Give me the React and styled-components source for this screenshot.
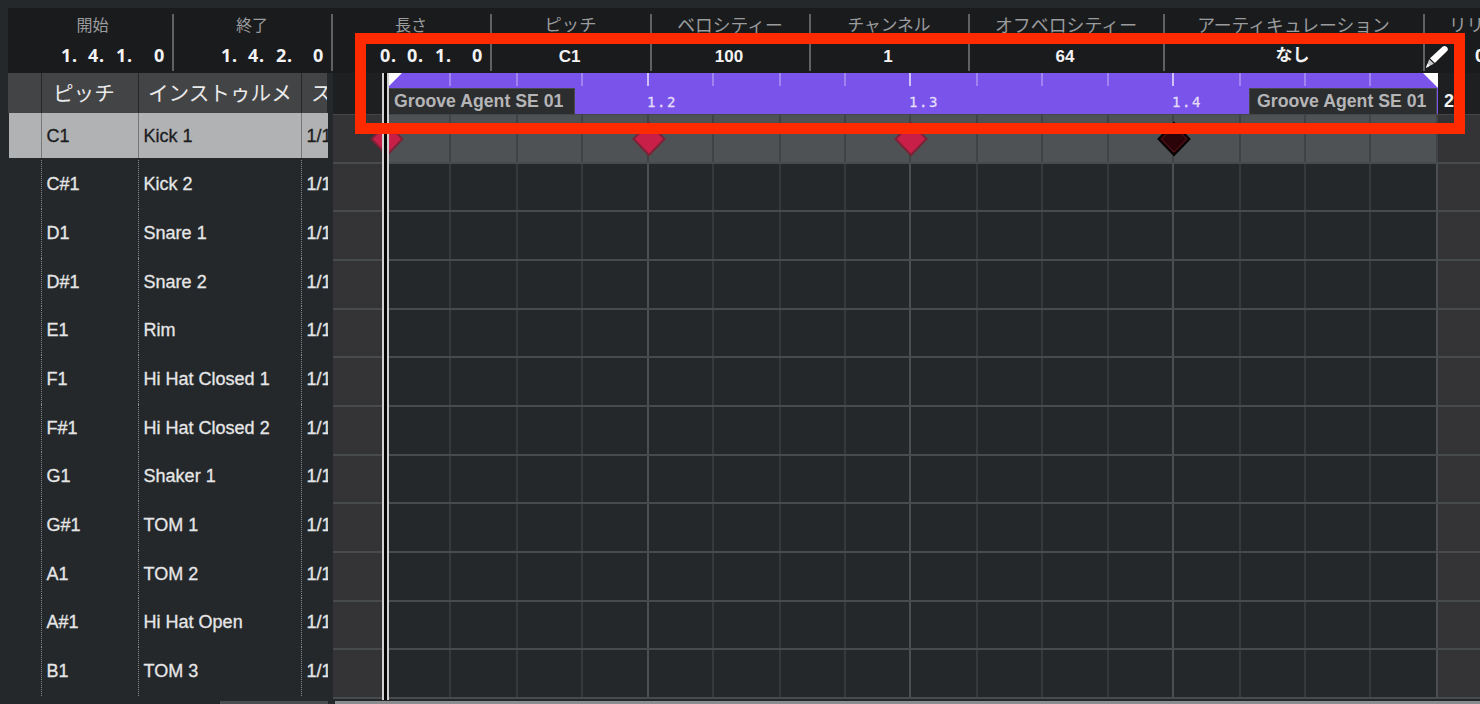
import React from 'react';
import styled, { createGlobalStyle } from "styled-components";

const infoFields = [
    { label: "開始", position: ["1.", "4.", "1.", "0"], width: 166, indent: 6 },
    { label: "終了", position: ["1.", "4.", "2.", "0"], width: 159 },
    { label: "長さ", position: ["0.", "0.", "1.", "0"], width: 159 },
    { label: "ピッチ", value: "C1", width: 160, size: 17.3 },
    { label: "ベロシティー", value: "100", width: 159, size: 17.8 },
    { label: "チャンネル", value: "1", width: 159, size: 16.7 },
    { label: "オフベロシティー", value: "64", width: 195, size: 17.9 },
    { label: "アーティキュレーション", value: "なし", width: 260, size: 17.8, jp: true },
];

const drums = [
    ["C1", "Kick 1"],
    ["C#1", "Kick 2"],
    ["D1", "Snare 1"],
    ["D#1", "Snare 2"],
    ["E1", "Rim"],
    ["F1", "Hi Hat Closed 1"],
    ["F#1", "Hi Hat Closed 2"],
    ["G1", "Shaker 1"],
    ["G#1", "TOM 1"],
    ["A1", "TOM 2"],
    ["A#1", "Hi Hat Open"],
    ["B1", "TOM 3"],
];

// width of each sixteenth, the last column of every beat is the 4th
const steps = [64, 67, 65, 66, 65, 67, 65, 65, 67, 65, 66, 65, 67, 65, 65, 67];

const notes = [
    { x: 54, selected: false },
    { x: 316, selected: false },
    { x: 578, selected: false },
    { x: 841, selected: true },
];

function Note({ x, selected }) {
    return (
        <NoteIcon $x={x} viewBox="0 0 36 36">
            <path
                d="M18 2 L33.5 18 L18 34 L2.5 18 Z"
                fill={selected ? "#2a0408" : "#c81f48"}
                stroke={selected ? "#080204" : "#7d2137"}
                strokeWidth="2"
            />
            {selected && <path d="M18 5 L30.5 18 L18 31 L5.5 18 Z" fill="none" stroke="#62141f" strokeWidth="1" />}
        </NoteIcon>
    )
}

function App() {
    return (
        <Container>
            <GlobalStyle />
            <InfoLine>
                {infoFields.map((f) => (
                    <InfoCell key={f.label} $width={f.width} $indent={f.indent}>
                        <InfoLabel $size={f.size}>{f.label}</InfoLabel>
                        {f.position ? (
                            <Position>
                                {f.position.map((p, i) => <span key={i}>{p}</span>)}
                            </Position>
                        ) : (
                            <InfoValue $jp={f.jp}>{f.value}</InfoValue>
                        )}
                    </InfoCell>
                ))}
                <LastCell>
                    <InfoLabel $size={17.5}>リリ</InfoLabel>
                    <Position>0</Position>
                </LastCell>
            </InfoLine>

            <Body>
                <DrumList>
                    <ListHeader>
                        <span />
                        <HeaderCell $pad={11}>ピッチ</HeaderCell>
                        <HeaderCell $pad={9}>インストゥルメ</HeaderCell>
                        <HeaderCell $pad={9}>ス</HeaderCell>
                    </ListHeader>
                    {drums.map(([pitch, name], i) => (
                        <DrumRow key={pitch} $active={i === 0}>
                            <span />
                            <DrumCell $active={i === 0}>{pitch}</DrumCell>
                            <DrumCell $active={i === 0}>{name}</DrumCell>
                            <DrumCell $active={i === 0}>1/1</DrumCell>
                        </DrumRow>
                    ))}
                    <ListScroll />
                </DrumList>

                <Editor>
                    <Ruler>
                        <RulerGutter />
                        <Part>
                            {steps.map((w, i) => (
                                <Tick key={i} $width={w} $beat={i % 4 === 3} $last={i === 15}>
                                    {i % 4 === 3 && i < 15 && <BeatText>{`1.${(i + 1) / 4 + 1}`}</BeatText>}
                                </Tick>
                            ))}
                            <LeftFlag viewBox="0 0 15 15"><path d="M0 0H15L0 15Z" fill="#fff" /></LeftFlag>
                            <RightFlag viewBox="0 0 15 15"><path d="M0 0H15V15Z" fill="#fff" /></RightFlag>
                            <PartName $side="left">Groove Agent SE 01</PartName>
                            <PartName $side="right">Groove Agent SE 01</PartName>
                        </Part>
                        <NextBar>2</NextBar>
                    </Ruler>
                    <Lanes>
                        {drums.map(([pitch], row) => (
                            <Lane key={pitch}>
                                <LaneGutter />
                                {steps.map((w, i) => (
                                    <Step key={i} $width={w} $active={row === 0} $beat={i % 4 === 3} />
                                ))}
                                <LaneEnd />
                            </Lane>
                        ))}
                        {notes.map((n) => <Note key={n.x} {...n} />)}
                    </Lanes>
                    <EditorScroll />
                    <Cursor />
                </Editor>
            </Body>

            <Highlight />
            <Pencil viewBox="0 0 26 26">
                <path d="M18.2 1.8 Q20.5 0 22.6 2 Q24.8 4.2 23 6.2 L10.2 18.6 L5.2 13.8 Z" fill="#fff" />
                <path d="M4.4 14.8 L9.2 19.4 L1 23.6 Z" fill="#c9c9c9" />
                <path d="M2.6 19.4 L5 21.6 L1 23.8 Z" fill="#fff" />
            </Pencil>
        </Container>
    )
}

export default App;

const GlobalStyle = createGlobalStyle`
* {
    box-sizing: border-box;
}

body {
    margin: 0;
    background: #24292c;
    overflow: hidden;
}
`

const Container = styled.div`
position: relative;
width: 1480px;
height: 704px;
padding: 8px 0 0 8px;
overflow: hidden;
background: #24282b;
font-family: "Liberation Sans", "Noto Sans CJK JP", sans-serif;
display: flex;
flex-direction: column;
`

const InfoLine = styled.div`
display: flex;
flex: none;
height: 65px;
padding-top: 6px;
overflow: hidden;
background: #1a1b1d;
`

const InfoCell = styled.div`
flex: none;
width: ${props => props.$width}px;
height: 57px;
padding-left: ${props => props.$indent || 0}px;
border-right: 2px solid #606163;
`

const LastCell = styled.div`
flex: none;
width: 90px;
padding-left: 24px;
text-align: left;

div {
    text-align: left;
    padding-right: 0;
}

div + div {
    display: block;
    padding-left: 26px;
}
`

const InfoLabel = styled.div`
height: 21px;
line-height: 20px;
padding-right: 1px;
text-align: center;
white-space: nowrap;
font-family: "Noto Sans CJK JP", sans-serif;
font-size: ${props => props.$size || 16}px;
color: #9b9c9e;
`

const Position = styled.div`
display: grid;
grid-template-columns: 27px 28px 29px 1fr;
justify-content: end;
width: 100%;
padding-left: 47px;
height: 42px;
line-height: 41px;
font-family: "Noto Sans", sans-serif;
font-weight: 700;
font-size: 18px;
letter-spacing: 0.8px;
color: #f3f3f4;

span:last-child {
    text-align: right;
    padding-right: 7px;
}
`

const InfoValue = styled.div`
height: 42px;
line-height: ${props => props.$jp ? 42 : 43}px;
padding-right: 3px;
text-align: center;
font-weight: 700;
font-size: 17px;
color: #f3f3f4;
`

const Body = styled.div`
display: flex;
flex: 1;
gap: 5px;
min-height: 0;
`

const DrumList = styled.div`
width: 320px;
flex: none;
overflow: hidden;
display: flex;
flex-direction: column;
`

const ListHeader = styled.div`
display: grid;
grid-template-columns: 33px 97px 163px 26px;
width: 319px;
height: 40px;
flex: none;
background: #434446;
overflow: hidden;
`

const HeaderCell = styled.div`
padding-left: ${props => props.$pad}px;
border-left: 1px solid #27282a;
line-height: 39px;
font-family: "Noto Sans CJK JP", sans-serif;
font-size: 20.6px;
color: #e9e9ea;
white-space: nowrap;
overflow: hidden;
`

const DrumRow = styled.div`
display: grid;
grid-template-columns: 32px 97px 163px 27px;
width: 319px;
margin-left: 1px;
flex: none;
height: ${props => props.$active ? 45 : 48.68}px;
margin-bottom: ${props => props.$active ? 2.2 : 0}px;
background: ${props => props.$active ? "#b1b2b4" : "transparent"};
`

const DrumCell = styled.div`
padding-left: 4.6px;
border-left: ${props => props.$active ? "1px solid #77787a" : "1px dotted #85878a"};
line-height: ${props => props.$active ? 46 : 48.6}px;
font-size: 18px;
color: ${props => props.$active ? "#1b1c1e" : "#e6e6e7"};
-webkit-text-stroke: 0.3px currentColor;
white-space: nowrap;
overflow: hidden;
`

const ListScroll = styled.div`
height: 3px;
width: 111px;
margin: auto 0 0 212px;
flex: none;
background: #4b4d4f;
`

const Editor = styled.div`
position: relative;
flex: 1;
min-width: 0;
overflow: hidden;
display: flex;
flex-direction: column;
`

const Ruler = styled.div`
display: flex;
height: 41px;
flex: none;
background: #1d1f21;
`

const RulerGutter = styled.div`
width: 54px;
flex: none;
`

const Part = styled.div`
position: relative;
display: flex;
width: 1051px;
flex: none;
background: #7a54ea;
`

const Tick = styled.div`
position: relative;
flex: none;
width: ${props => props.$width}px;
height: 13px;
border-right: ${props => props.$last ? "none" : `2px solid ${props.$beat ? "#cfc1f8" : "#9f84f1"}`};
`

const BeatText = styled.span`
position: absolute;
left: 100%;
top: 20px;
font-family: "DejaVu Sans Mono", monospace;
font-size: 14px;
letter-spacing: 1.6px;
line-height: 18px;
color: #e4dcfa;
-webkit-text-stroke: 0.3px currentColor;
`

const LeftFlag = styled.svg`
position: absolute;
left: 0;
top: 0;
width: 15px;
height: 15px;
`

const RightFlag = styled(LeftFlag)`
left: auto;
right: 0;
`

const PartName = styled.div`
position: absolute;
top: 15px;
${props => props.$side}: 1px;
width: ${props => props.$side === "left" ? 187 : 188}px;
height: 26px;
padding-left: ${props => props.$side === "left" ? 5 : 7}px;
border: solid #48494c;
border-width: 1px 1px 0 1px;
background: #2c2d2f;
line-height: 25px;
font-size: 17.7px;
font-weight: 700;
color: #b5b5b7;
white-space: nowrap;
`

const NextBar = styled.div`
padding: 16px 0 0 6px;
font-size: 18px;
line-height: 24px;
font-weight: 700;
color: #f3f3f4;
`

const Lanes = styled.div`
position: relative;
flex: none;
border-top: 1px solid #444648;
`

const Lane = styled.div`
display: flex;
height: 48.68px;
border-bottom: 2px solid #484b4d;
`

const LaneGutter = styled.div`
width: 54px;
flex: none;
background: #343436;
`

const Step = styled.div`
flex: none;
width: ${props => props.$width}px;
border-right: 2px solid ${props => props.$active ? "#404345" : props.$beat ? "#4b4f51" : "#35393c"};
background: ${props => props.$active ? "#4f5254" : "#24282b"};
`

const LaneEnd = styled.div`
flex: 1;
background: #343436;
`

const NoteIcon = styled.svg`
position: absolute;
left: ${props => props.$x - 18}px;
top: 6px;
width: 36px;
height: 36px;
`

const Cursor = styled.div`
position: absolute;
left: 49px;
top: 0;
width: 7px;
height: 627px;
background: #060606;
border: solid #d0d0d0;
border-width: 0 2px;
`

const EditorScroll = styled.div`
height: 3px;
margin: auto 0 0 2px;
flex: none;
background: #8b8c8e;
`

const Highlight = styled.div`
position: absolute;
left: 355px;
top: 33px;
width: 1110px;
height: 101px;
border: 11px solid #ff2a00;
`

const Pencil = styled.svg`
position: absolute;
left: 1425px;
top: 45px;
width: 25px;
height: 25px;
`
